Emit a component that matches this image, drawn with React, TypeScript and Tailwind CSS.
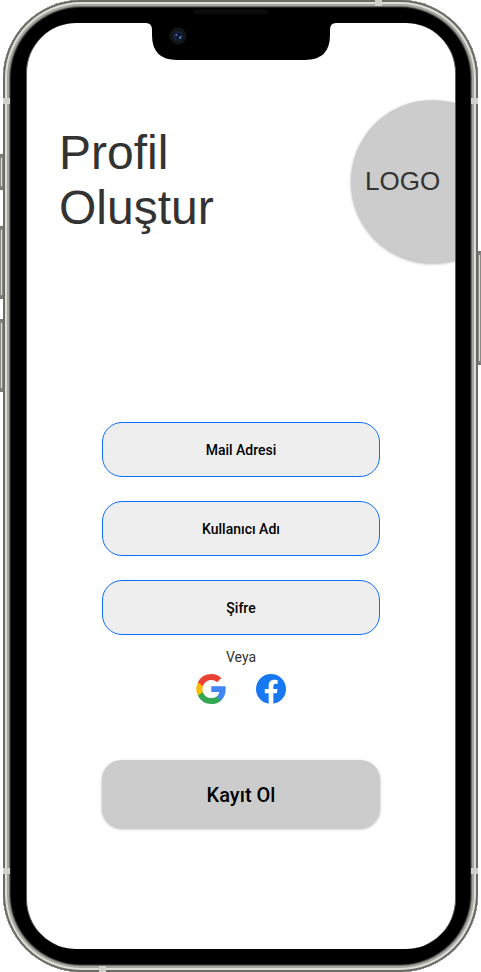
import React from "react";

const fields = [
  { id: "mail", label: "Mail Adresi", type: "email" },
  { id: "username", label: "Kullanıcı Adı", type: "text" },
  { id: "password", label: "Şifre", type: "password" },
];

function GoogleIcon() {
  return (
    <svg viewBox="0 0 48 48" className="size-[30px]" aria-hidden="true">
      <path fill="#4285F4" d="M47.53 24.55c0-1.63-.14-3.27-.43-4.87H24.48v9.24h12.95a11.1 11.1 0 0 1-4.8 7.28v6h7.73c4.54-4.18 7.17-10.35 7.17-17.65z" />
      <path fill="#34A853" d="M24.48 48c6.47 0 11.92-2.12 15.9-5.79l-7.73-6c-2.15 1.47-4.93 2.3-8.16 2.3-6.26 0-11.56-4.22-13.47-9.9H3.05v6.18A24 24 0 0 0 24.48 48z" />
      <path fill="#FBBC04" d="M11.01 28.6a14.4 14.4 0 0 1 0-9.19v-6.18H3.05a24 24 0 0 0 0 21.55l7.96-6.18z" />
      <path fill="#EA4335" d="M24.48 9.5c3.42-.06 6.72 1.23 9.2 3.6l6.85-6.85A23.05 23.05 0 0 0 24.48 0 24 24 0 0 0 3.05 13.23l7.96 6.18C12.91 13.72 18.22 9.5 24.48 9.5z" />
    </svg>
  );
}

function FacebookIcon() {
  return (
    <svg viewBox="8 8 496 496" className="size-[30px]" aria-hidden="true">
      <circle cx="256" cy="256" r="248" fill="#1877F2" />
      <path fill="#ffffff" d="M217.250 504V327.690h-63V256h63v-54.640c0-62.150 37-96.480 93.670-96.480 27.140 0 55.520 4.840 55.520 4.840v61h-31.280c-30.800 0-40.410 19.120-40.410 38.730V256h68.780l-11 71.690h-57.780V504z" />
    </svg>
  );
}

function Notch() {
  return (
    <svg viewBox="0 0 190 52" className="absolute inset-x-0 top-2 mx-auto h-[52px] w-[190px]" aria-hidden="true">
      <path d="M0 0V15q6 0 6 7v5q0 25 25 25H159q25 0 25-25v-5q0-7 6-7V0z" />
      <rect x="47" y="1" width="75" height="5" rx="2" fill="#0b0b0b" />
      <circle cx="32" cy="28" r="8.5" fill="#121417" />
      <circle cx="32" cy="28" r="5" fill="#14253b" />
      <circle cx="32" cy="28" r="3" fill="#0a1020" />
      <circle cx="30.5" cy="27" r="1.2" fill="#5c62a8" />
      <circle cx="34" cy="29.5" r="1.2" fill="#4d8fc4" />
    </svg>
  );
}

function SideKey({ className }: { className: string }) {
  return <div className={"border-y-4 border-x border-y-[#777872] border-x-[#8a8b85] bg-[#dcddd8] " + className} />;
}

function Band() {
  return <div className="h-1.5 w-[7px] bg-[#d0d1cb]" />;
}

function AntennaBands() {
  return (
    <div className="pointer-events-none absolute inset-0 flex flex-col justify-between">
      <div className="flex flex-col gap-[92px]">
        <div className="flex justify-end pr-24">
          <Band />
        </div>
        <div className="flex justify-between">
          <Band />
          <Band />
        </div>
      </div>
      <div className="flex flex-col gap-[92px]">
        <div className="flex justify-between">
          <Band />
          <Band />
        </div>
        <div className="flex pl-24">
          <Band />
        </div>
      </div>
    </div>
  );
}

export default function App() {
  return (
    <div className="flex w-full bg-white">
      <div className="flex w-[3px] shrink-0 flex-col pt-[154px]">
        <SideKey className="h-9" />
        <SideKey className="mt-9 h-[73px]" />
        <SideKey className="mt-5 h-[73px]" />
      </div>

      <div className="relative min-w-0 flex-1 rounded-[78px] bg-black py-[23px] pl-[23px] pr-[22px] shadow-[inset_0_0_0_2px_#6b6c65,inset_0_0_0_4px_#dedfd8,inset_0_0_0_6px_#a5a69f,inset_0_0_0_7px_#6b6c65,inset_0_0_0_8px_#222222]">
        <main className="overflow-hidden rounded-[50px] border-x border-[#5c5c5c] bg-white pb-[121px] pt-[77px]">
          <header className="flex items-center justify-between pl-8">
            <h1 className="pb-[3px] font-['Liberation_Sans',Arial,sans-serif] text-5xl leading-[55px] text-[#333333]">
              Profil
              <br />
              Oluştur
            </h1>
            <div className="-mr-[59px] flex size-[163px] shrink-0 items-center rounded-full bg-[#cccccc] pl-3.5 font-['Liberation_Sans',Arial,sans-serif] text-[26px] text-[#333333] shadow-[0_1px_3px_rgba(0,0,0,0.3)]">
              LOGO
            </div>
          </header>

          <form className="mt-[159px] px-[75px] font-[Roboto,sans-serif]" onSubmit={(e) => e.preventDefault()}>
            <div className="flex flex-col gap-6">
              {fields.map((f) => (
                <input
                  key={f.id}
                  id={f.id}
                  type={f.type}
                  aria-label={f.label}
                  placeholder={f.label}
                  className="h-[55px] w-full rounded-[20px] border border-[#0d6efd] bg-[#eeeeee] text-center text-sm font-medium text-black outline-none placeholder:text-black placeholder:opacity-100"
                />
              ))}
            </div>
            <p className="mt-3 text-center text-sm text-[#333333]">Veya</p>
            <div className="mt-[7px] flex justify-center gap-[30px]">
              <button type="button" aria-label="Google">
                <GoogleIcon />
              </button>
              <button type="button" aria-label="Facebook">
                <FacebookIcon />
              </button>
            </div>
            <button
              type="submit"
              className="mt-14 h-[68px] w-full rounded-[20px] bg-[#cccccc] pt-0.5 text-xl font-medium text-black shadow-[0_1px_3px_rgba(0,0,0,0.3)]"
            >
              Kayıt Ol
            </button>
          </form>
        </main>
        <Notch />
        <AntennaBands />
      </div>

      <div className="flex w-[3px] shrink-0 flex-col pt-[251px]">
        <SideKey className="h-[114px]" />
      </div>
    </div>
  );
}
